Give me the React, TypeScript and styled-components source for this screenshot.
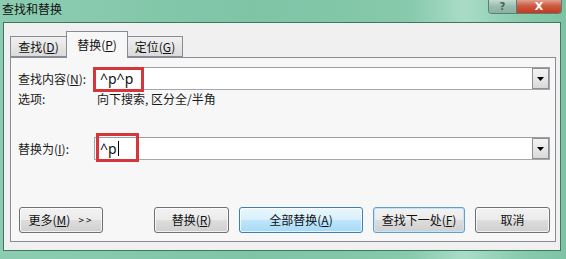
import React from 'react';
import styled, { createGlobalStyle } from 'styled-components';

const GlobalStyle = createGlobalStyle`
	html, body {
		margin: 0;
		padding: 0;
		background: #ffffff;
	}
	body {
		font-family: "Noto Sans CJK SC", "Noto Sans", sans-serif;
		font-size: 12px;
		color: #1a1a1a;
	}
`;

const Window = styled.div`
	width: 566px;
	height: 259px;
	display: flex;
	flex-direction: column;
	overflow: hidden;
	background: linear-gradient(to right, #8ccdb1 0%, #7ec4a5 45%, #86c9ab 72%, #a9dcc7 82%, #88cbad 92%, #7cc3a4 100%);
`;

const TitleBar = styled.div`
	height: 22px;
	flex: 0 0 22px;
	display: flex;
	align-items: flex-start;
	justify-content: space-between;
`;

const Title = styled.div`
	padding: 1px 0 0 2px;
	line-height: 16px;
	font-size: 12px;
	color: #111;
`;

const Controls = styled.div`
	display: flex;
	margin-right: 4px;
	border: 1px solid #5f7d72;
	border-top: none;
	border-radius: 0 0 4px 4px;
	overflow: hidden;
	height: 13px;
`;

const CtrlButton = styled.div<{ $close?: boolean }>`
	width: ${(p) => (p.$close ? 44 : 27)}px;
	height: 13px;
	display: flex;
	align-items: center;
	justify-content: center;
	font-family: "DejaVu Sans", sans-serif;
	font-weight: bold;
	font-size: ${(p) => (p.$close ? 11 : 10)}px;
	line-height: 13px;
	color: ${(p) => (p.$close ? '#ffffff' : '#4d5d58')};
	background: ${(p) =>
		p.$close
			? 'linear-gradient(to bottom, #e1a08f 0%, #cd5a40 45%, #c2391f 100%)'
			: 'linear-gradient(to bottom, #c2dcd2 0%, #98bcae 50%, #89b1a2 100%)'};
	border-right: ${(p) => (p.$close ? 'none' : '1px solid #5f7d72')};
`;

const Body = styled.div`
	flex: 1;
	margin: 0 5px 8px 3px;
	border: 1px solid #3f7764;
	background: #f0f0f0;
	padding: 8px 4px 8px 6px;
	display: flex;
	flex-direction: column;
`;

const TabStrip = styled.div`
	height: 26px;
	display: flex;
	align-items: flex-end;
	position: relative;
	z-index: 1;
`;

const Tab = styled.div<{ $active?: boolean; $w: number }>`
	box-sizing: border-box;
	width: ${(p) => p.$w}px;
	height: ${(p) => (p.$active ? 27 : 21)}px;
	margin-bottom: ${(p) => (p.$active ? -1 : 0)}px;
	border: 1px solid #898c95;
	border-bottom: ${(p) => (p.$active ? 'none' : '1px solid #898c95')};
	margin-left: ${(p) => (p.$active ? -1 : 0)}px;
	margin-right: ${(p) => (p.$active ? -1 : 0)}px;
	background: ${(p) =>
		p.$active ? '#f7f7f7' : 'linear-gradient(to bottom, #f0f0f0 0%, #e6e6e6 50%, #dadada 100%)'};
	display: flex;
	align-items: center;
	justify-content: center;
	padding-top: ${(p) => (p.$active ? 0 : 1)}px;
	line-height: 16px;
	color: #111;
`;

const Panel = styled.div`
	height: 185px;
	box-sizing: border-box;
	border: 1px solid #898c95;
	background: #f7f7f7;
	padding: 9px 5px 0 7px;
	display: flex;
	flex-direction: column;
`;

const FieldRow = styled.div<{ $top?: number }>`
	display: flex;
	align-items: center;
	height: 23px;
	margin-top: ${(p) => p.$top || 0}px;
`;

const Label = styled.div`
	width: 76px;
	flex: 0 0 76px;
	line-height: 16px;
	white-space: nowrap;
`;

const InputBox = styled.div`
	position: relative;
	flex: 1;
	height: 23px;
	box-sizing: border-box;
	border: 1px solid #a3a7ae;
	border-top-color: #9b9fa6;
	background: #ffffff;
	display: flex;
	align-items: center;
`;

const InputText = styled.div`
	flex: 1;
	padding-left: 5px;
	font-family: "Noto Sans", "DejaVu Sans", sans-serif;
	font-size: 14px;
	line-height: 20px;
	color: #111;
	display: flex;
	align-items: center;
`;

const Caret = styled.span`
	display: inline-block;
	width: 1px;
	height: 15px;
	background: #000;
	margin-left: 1px;
`;

const DropButton = styled.div`
	width: 17px;
	height: 21px;
	box-sizing: border-box;
	border: 1px solid #8e8f8f;
	background: linear-gradient(to bottom, #f3f3f3 0%, #e8e8e8 50%, #d9d9d9 100%);
	display: flex;
	align-items: center;
	justify-content: center;
	margin-right: 0;
`;

const Mark = styled.div<{ $l: number; $t: number; $w: number; $h: number }>`
	position: absolute;
	left: ${(p) => p.$l}px;
	top: ${(p) => p.$t}px;
	width: ${(p) => p.$w}px;
	height: ${(p) => p.$h}px;
	box-sizing: border-box;
	border: 3px solid #d4363c;
	pointer-events: none;
`;

const OptionsRow = styled.div`
	display: flex;
	margin-top: 1px;
	height: 16px;
	line-height: 16px;
`;

const OptionsValue = styled.div`
	padding-left: 3px;
`;

const ButtonRow = styled.div`
	display: flex;
	margin-top: 47px;
	padding-left: 1px;
	gap: 10px;
`;

const Button = styled.div<{ $w: number; $kind?: 'default' | 'focus'; $push?: boolean }>`
	box-sizing: border-box;
	width: ${(p) => p.$w}px;
	height: 26px;
	border-radius: 3px;
	border: 1px solid ${(p) => (p.$kind === 'default' ? '#3c7fb1' : p.$kind === 'focus' ? '#5d9fcf' : '#707070')};
	box-shadow: inset 0 0 0 1px ${(p) => (p.$kind === 'focus' ? '#c6e4f7' : 'rgba(255,255,255,0.7)')};
	background: ${(p) =>
		p.$kind === 'default'
			? 'linear-gradient(to bottom, #eaf6fd 0%, #d9f0fc 48%, #bee6fd 52%, #a7d9f5 100%)'
			: 'linear-gradient(to bottom, #f2f2f2 0%, #ebebeb 48%, #dddddd 52%, #cfcfcf 100%)'};
	display: flex;
	align-items: center;
	justify-content: center;
	margin-left: ${(p) => (p.$push ? 'auto' : '0')};
	line-height: 16px;
	color: #111;
	white-space: nowrap;
`;

const Arrows = styled.span`
	margin-left: 8px;
	font-size: 10px;
	letter-spacing: 2px;
`;

export default function App() {
	return (
		<>
			<GlobalStyle />
			<Window>
				<TitleBar>
					<Title>查找和替换</Title>
					<Controls>
						<CtrlButton>?</CtrlButton>
						<CtrlButton $close>X</CtrlButton>
					</Controls>
				</TitleBar>
				<Body>
					<TabStrip>
						<Tab $w={57}>查找(<u>D</u>)</Tab>
						<Tab $w={62} $active>替换(<u>P</u>)</Tab>
						<Tab $w={56}>定位(<u>G</u>)</Tab>
					</TabStrip>
					<Panel>
						<FieldRow>
							<Label>查找内容(<u>N</u>):</Label>
							<InputBox>
								<InputText>^p^p</InputText>
								<DropButton>
									<svg width="7" height="4" viewBox="0 0 7 4">
										<path d="M0 0 H7 L3.5 4 Z" fill="#000" />
									</svg>
								</DropButton>
								<Mark $l={-2} $t={-1} $w={51} $h={25} />
							</InputBox>
						</FieldRow>
						<OptionsRow>
							<Label>选项:</Label>
							<OptionsValue>向下搜索, 区分全/半角</OptionsValue>
						</OptionsRow>
						<FieldRow $top={30}>
							<Label>替换为(<u>I</u>):</Label>
							<InputBox>
								<InputText>
									^p<Caret />
								</InputText>
								<DropButton>
									<svg width="7" height="4" viewBox="0 0 7 4">
										<path d="M0 0 H7 L3.5 4 Z" fill="#000" />
									</svg>
								</DropButton>
								<Mark $l={1} $t={-5} $w={43} $h={29} />
							</InputBox>
						</FieldRow>
						<ButtonRow>
							<Button $w={84}>
								更多(<u>M</u>)<Arrows>&gt;&gt;</Arrows>
							</Button>
							<Button $w={75} $push>替换(<u>R</u>)</Button>
							<Button $w={124} $kind="default">全部替换(<u>A</u>)</Button>
							<Button $w={92} $kind="focus">查找下一处(<u>F</u>)</Button>
							<Button $w={75}>取消</Button>
						</ButtonRow>
					</Panel>
				</Body>
			</Window>
		</>
	);
}
